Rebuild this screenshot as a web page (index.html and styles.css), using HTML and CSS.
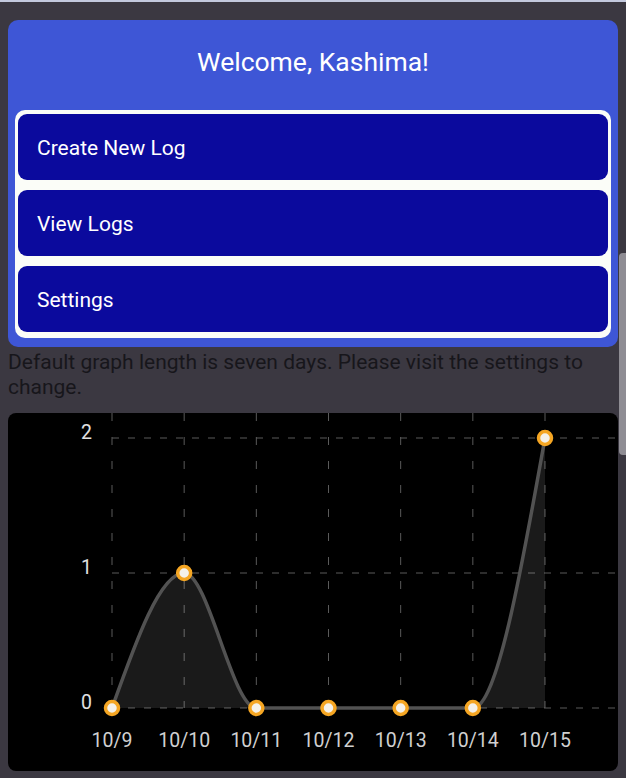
FILE: index.html
```html
<!DOCTYPE html>
<html lang="en">
<head>
<meta charset="utf-8">
<title>Home</title>
<link rel="stylesheet" href="styles.css">
</head>
<body>
<div class="card">
  <h1 class="title">Welcome, Kashima!</h1>
  <div class="menu">
    <div class="btn">Create New Log</div>
    <div class="btn">View Logs</div>
    <div class="btn">Settings</div>
  </div>
</div>
<p class="note">Default graph length is seven days. Please visit the settings to change.</p>
<div class="chart">
  <svg class="chart-svg" width="610" height="358" viewBox="0 0 610 358">
    <g class="grid-v">
      <line x1="104" y1="0" x2="104" y2="295"/>
      <line x1="176.17" y1="0" x2="176.17" y2="295"/>
      <line x1="248.33" y1="0" x2="248.33" y2="295"/>
      <line x1="320.5" y1="0" x2="320.5" y2="295"/>
      <line x1="392.67" y1="0" x2="392.67" y2="295"/>
      <line x1="464.83" y1="0" x2="464.83" y2="295"/>
      <line x1="537" y1="0" x2="537" y2="295"/>
    </g>
    <g class="grid-h">
      <line x1="104" y1="25" x2="610" y2="25"/>
      <line x1="104" y1="160" x2="610" y2="160"/>
      <line x1="104" y1="295" x2="610" y2="295"/>
    </g>
    <path class="area" d="M104,295 C128.06,227.5 152.11,160 176.17,160 C200.22,160 224.28,295 248.33,295 L464.83,295 C488.89,295 512.94,160 537,25 L537,295 L104,295 Z"/>
    <path class="curve" d="M104,295 C128.06,227.5 152.11,160 176.17,160 C200.22,160 224.28,295 248.33,295 L464.83,295 C488.89,295 512.94,160 537,25"/>
    <g class="dots">
      <circle cx="104" cy="295" r="6.5"/>
      <circle cx="176.17" cy="160" r="6.5"/>
      <circle cx="248.33" cy="295" r="6.5"/>
      <circle cx="320.5" cy="295" r="6.5"/>
      <circle cx="392.67" cy="295" r="6.5"/>
      <circle cx="464.83" cy="295" r="6.5"/>
      <circle cx="537" cy="25" r="6.5"/>
    </g>
    <g class="ylabels">
      <text x="84" y="25.5">2</text>
      <text x="84" y="160.5">1</text>
      <text x="84" y="295.5">0</text>
    </g>
    <g class="xlabels">
      <text x="104" y="334">10/9</text>
      <text x="176.17" y="334">10/10</text>
      <text x="248.33" y="334">10/11</text>
      <text x="320.5" y="334">10/12</text>
      <text x="392.67" y="334">10/13</text>
      <text x="464.83" y="334">10/14</text>
      <text x="537" y="334">10/15</text>
    </g>
  </svg>
</div>
<div class="scroll-thumb"></div>
</body>
</html>
```
FILE: styles.css
```css
html {
  background: #3b3841;
  border-top: 2px solid #c3c9de;
}
body {
  margin: 0;
  padding: 18px 8px 8px 8px;
  font-family: Roboto, "Noto Sans", "Liberation Sans", sans-serif;
}
.card {
  background: #3e56d6;
  border-radius: 10px;
  padding: 28px 7px 9px 7px;
}
.title {
  margin: 0 0 34px 0;
  font-size: 26.5px;
  line-height: 28px;
  font-weight: 400;
  color: #ffffff;
  text-align: center;
}
.menu {
  background: #fbfdf8;
  border-radius: 10px;
  padding: 4px 3px 6px 3px;
  display: flex;
  flex-direction: column;
  gap: 10px;
}
.btn {
  height: 66px;
  box-sizing: border-box;
  padding-top: 2px;
  background: #0b0a9d;
  border-radius: 9px;
  color: #ffffff;
  font-size: 21px;
  display: flex;
  align-items: center;
  padding-left: 19px;
}
.note {
  margin: 3px 0 13px 0;
  font-size: 21px;
  line-height: 25px;
  color: #17161b;
}
.chart {
  background: #000000;
  border-radius: 8px;
  height: 358px;
  overflow: hidden;
}
.chart-svg {
  display: block;
}
.grid-v line {
  stroke: #5a5a5a;
  stroke-width: 1;
  stroke-dasharray: 8 16;
}
.grid-h line {
  stroke: #5a5a5a;
  stroke-width: 1;
  stroke-dasharray: 7 9;
}
.area {
  fill: rgba(255, 255, 255, 0.1);
}
.curve {
  fill: none;
  stroke: #525252;
  stroke-width: 3.5;
}
.dots circle {
  fill: #f4f1ea;
  stroke: #f5a623;
  stroke-width: 3.5;
}
.ylabels text {
  font-family: Roboto, "Noto Sans", sans-serif;
  font-size: 19.5px;
  fill: #e0e0e0;
  text-anchor: end;
}
.xlabels text {
  font-family: Roboto, "Noto Sans", sans-serif;
  font-size: 19.5px;
  fill: #d0d0d0;
  text-anchor: middle;
}
.scroll-thumb {
  position: fixed;
  right: 0;
  top: 253px;
  width: 7px;
  height: 202px;
  background: #8f8d94;
  border-radius: 4px 0 0 4px;
}
```
